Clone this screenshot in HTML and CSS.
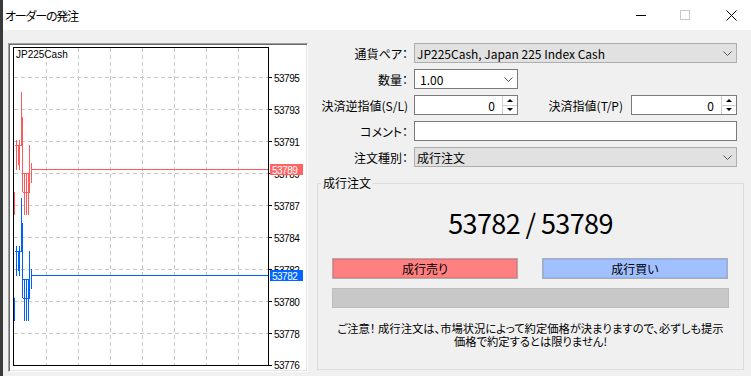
FILE: index.html
```html
<!DOCTYPE html>
<html lang="ja">
<head>
  <meta charset="UTF-8" />
  <title>オーダーの発注</title>
  <link rel="stylesheet" href="styles.css">
</head>
<body>
  <div class="window">
    <div class="titlebar">
      <span class="title">オーダーの発注</span>
      <div class="caption">
        <div class="caption-btn">
          <svg width="10" height="10" viewBox="0 0 10 10"><path d="M0 5.5H10" stroke="#000" /></svg>
        </div>
        <div class="caption-btn">
          <svg width="10" height="10" viewBox="0 0 10 10"><rect x="0.5" y="0.5" width="9" height="9" fill="none" stroke="#c8c8c8" /></svg>
        </div>
        <div class="caption-btn close">
          <svg width="11" height="11" viewBox="0 0 11 11"><path d="M0.5 0.5L10.5 10.5M10.5 0.5L0.5 10.5" stroke="#000" /></svg>
        </div>
      </div>
    </div>

    <div class="content">
      <div class="chart">
        <svg width="296" height="325" viewBox="10 45 296 325" shape-rendering="crispEdges">
          <!-- グリッド -->
          <path class="grid" d="M14 77.5H268M14 109.5H268M14 141.5H268M14 173.5H268M14 205.5H268M14 237.5H268M14 269.5H268M14 301.5H268M14 333.5H268" />
          <path class="grid" d="M46.5 48V366M78.5 48V366M110.5 48V366M142.5 48V366M174.5 48V366M206.5 48V366M238.5 48V366" />
          <rect x="13.5" y="47.5" width="255" height="318" fill="none" stroke="#000" />
          <path d="M268 77.5H272M268 109.5H272M268 141.5H272M268 173.5H272M268 205.5H272M268 237.5H272M268 269.5H272M268 301.5H272M268 333.5H272M268 365.5H272" stroke="#000" />

          <g class="axis">
            <text x="274" y="81.5">53795</text>
            <text x="274" y="113.5">53793</text>
            <text x="274" y="145.5">53791</text>
            <text x="274" y="177.5">53789</text>
            <text x="274" y="209.5">53787</text>
            <text x="274" y="241.5">53784</text>
            <text x="274" y="273.5">53782</text>
            <text x="274" y="305.5">53780</text>
            <text x="274" y="337.5">53778</text>
            <text x="274" y="369">53776</text>
          </g>

          <!-- バー (Ask) -->
          <g class="ask">
            <path d="M14.5 192V215M16.5 140V170M18.5 145V165M19.5 140V170M15 145.5H22M21.5 92V145M22.5 117V192M24.5 173V215M26.5 173V215M28.5 173V215M23 173.5H29M23 192.5H30M29.5 145V192M31.5 163V183" />
            <path d="M31 169.5H268" />
          </g>
          <!-- バー (Bid) -->
          <g class="bid" transform="translate(0 106)">
            <path d="M14.5 192V215M16.5 140V170M18.5 145V165M19.5 140V170M15 145.5H22M21.5 92V145M22.5 117V192M24.5 173V215M26.5 173V215M28.5 173V215M23 173.5H29M23 192.5H30M29.5 145V192M31.5 163V183" />
            <path d="M31 169.5H268" />
          </g>

          <rect x="270" y="164" width="33" height="11" fill="#ff6464" />
          <text class="axis tag" x="272" y="173.5">53789</text>
          <rect x="270" y="270" width="33" height="11" fill="#0066ff" />
          <text class="axis tag" x="272" y="279.5">53782</text>

          <text class="symbol" x="16" y="58">JP225Cash</text>
        </svg>
      </div>

      <div class="panel">
        <div class="form">
          <label>通貨ペア：</label>
          <div class="combo">
            <span>JP225Cash, Japan 225 Index Cash</span>
            <svg class="chevron" width="9" height="5" viewBox="0 0 9 5"><path d="M0.5 0.5L4.5 4.5L8.5 0.5" fill="none" stroke="#555" /></svg>
          </div>

          <label>数量：</label>
          <div class="line">
            <div class="combo white lots">
              <span>1.00</span>
              <svg class="chevron" width="9" height="5" viewBox="0 0 9 5"><path d="M0.5 0.5L4.5 4.5L8.5 0.5" fill="none" stroke="#555" /></svg>
            </div>
          </div>

          <label>決済逆指値(S/L)</label>
          <div class="line">
            <div class="spin sl">
              <span class="spin-value">0</span>
              <div class="spin-btns">
                <div class="spin-up"><i></i></div>
                <div class="spin-down"><i></i></div>
              </div>
            </div>
            <label class="inline-label">決済指値(T/P)</label>
            <div class="spin tp">
              <span class="spin-value">0</span>
              <div class="spin-btns">
                <div class="spin-up"><i></i></div>
                <div class="spin-down"><i></i></div>
              </div>
            </div>
          </div>

          <label>コメント：</label>
          <div class="text-input"></div>

          <label>注文種別：</label>
          <div class="combo">
            <span>成行注文</span>
            <svg class="chevron" width="9" height="5" viewBox="0 0 9 5"><path d="M0.5 0.5L4.5 4.5L8.5 0.5" fill="none" stroke="#555" /></svg>
          </div>
        </div>

        <fieldset class="group">
          <legend>成行注文</legend>
          <div class="price">53782 / 53789</div>
          <div class="actions">
            <div class="btn sell">成行売り</div>
            <div class="btn buy">成行買い</div>
          </div>
          <div class="status-bar"></div>
          <p class="notice">ご注意！ 成行注文は、市場状況によって約定価格が決まりますので、必ずしも提示<br>価格で約定するとは限りません!</p>
        </fieldset>
      </div>
    </div>
  </div>
</body>
</html>
```

FILE: styles.css
```css
* {
  box-sizing: border-box;
}
body {
  margin: 0;
  font-family: "Noto Sans CJK JP", sans-serif;
  font-size: 12px;
  color: #000;
  font-feature-settings: "palt";
}
.window {
  width: 751px;
  height: 376px;
  border-left: 3px solid #3a3a3a;
  background: #f0f0f0;
  overflow: hidden;
}
.titlebar {
  height: 30px;
  background: #fff;
  display: flex;
  align-items: center;
  justify-content: space-between;
  padding-left: 2px;
}
.title {
  letter-spacing: -1.2px;
}
.caption {
  display: flex;
  height: 100%;
}
.caption-btn {
  width: 44px;
  display: flex;
  align-items: center;
  justify-content: center;
}
.caption-btn.close {
  padding-left: 4px;
}
.content {
  display: flex;
  gap: 9px;
  padding: 13px 0 0 5px;
}

/* チャート */
.chart {
  width: 300px;
  height: 329px;
  padding: 1px;
  background: #fff;
  border: 1px solid;
  border-color: #a0a0a0 #fff #fff #a0a0a0;
  box-shadow: inset 1px 1px #696969, inset -1px -1px #e3e3e3;
}
.chart svg {
  display: block;
}
.grid {
  fill: none;
  stroke: #c8c8c8;
  stroke-dasharray: 4 3;
}
.ask path {
  fill: none;
  stroke: #ff5a5a;
}
.bid path {
  fill: none;
  stroke: #0060ff;
}
.axis {
  font-family: "Liberation Sans", sans-serif;
  font-size: 10px;
  letter-spacing: -0.5px;
  fill: #000;
}
.tag {
  fill: #fff;
}
.symbol {
  font-family: "Liberation Sans", sans-serif;
  font-size: 10px;
  fill: #000;
}

/* フォーム */
.panel {
  width: 427px;
}
.form {
  display: grid;
  grid-template-columns: 91px 323px;
  grid-auto-rows: 20px;
  column-gap: 6px;
  row-gap: 6px;
  align-items: center;
}
.form label {
  text-align: right;
  white-space: nowrap;
}
.line {
  display: flex;
  align-items: center;
  height: 20px;
}
.combo {
  height: 20px;
  border: 1px solid #adadad;
  background: #e1e1e1;
  display: flex;
  align-items: center;
  justify-content: space-between;
  padding: 0 4px 0 2px;
}
.combo.white {
  background: #fff;
  border-color: #7a7a7a;
}
.lots {
  width: 104px;
  padding-left: 5px;
}
.chevron {
  display: block;
}
.spin {
  height: 20px;
  border: 1px solid #7a7a7a;
  background: #fff;
  display: flex;
  align-items: center;
  justify-content: flex-end;
}
.sl {
  width: 104px;
}
.tp {
  width: 106px;
}
.spin-value {
  padding-right: 7px;
}
.spin-btns {
  width: 15px;
  height: 18px;
  border-left: 1px solid #cfcfcf;
  display: flex;
  flex-direction: column;
}
.spin-up, .spin-down {
  flex: 1;
  display: flex;
  align-items: center;
  justify-content: center;
}
.spin-up {
  border-bottom: 1px solid #cfcfcf;
}
.spin-up i, .spin-down i {
  width: 0;
  height: 0;
  border-left: 3px solid transparent;
  border-right: 3px solid transparent;
}
.spin-up i {
  border-bottom: 3px solid #000;
}
.spin-down i {
  border-top: 3px solid #000;
}
.form .inline-label {
  flex: 1;
  padding-right: 8px;
}
.text-input {
  height: 20px;
  border: 1px solid #7a7a7a;
  background: #fff;
}

/* 成行注文 */
.group {
  margin: 8px 0 0;
  padding: 0 14px;
  height: 195px;
  border: 1px solid #dcdcdc;
  min-width: 0;
}
.group legend {
  padding: 0 2px;
  margin-left: -11px;
  line-height: 16px;
}
.price {
  margin-top: 15px;
  font-size: 27px;
  line-height: 34px;
  letter-spacing: -0.6px;
  text-align: center;
}
.actions {
  margin-top: 18px;
  display: flex;
  gap: 24px;
}
.btn {
  width: 186px;
  height: 21px;
  border: 1px solid #adadad;
  display: flex;
  align-items: center;
  justify-content: center;
}
.sell {
  background: #ff8080;
  box-shadow: inset 0 0 0 1px #f07070;
}
.buy {
  background: #a0c0ff;
  box-shadow: inset 0 0 0 1px #90b2f4;
}
.status-bar {
  margin-top: 9px;
  height: 20px;
  background: #c8c8c8;
  border: 1px solid #bcbcbc;
}
.notice {
  margin: 14px 0 0;
  font-size: 11.3px;
  line-height: 12.5px;
  text-align: center;
  white-space: nowrap;
}
```
